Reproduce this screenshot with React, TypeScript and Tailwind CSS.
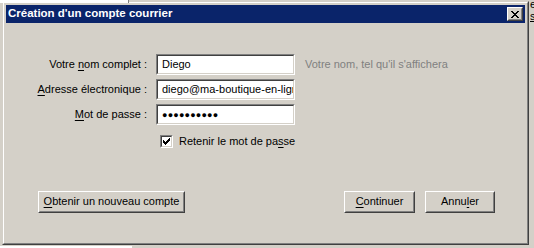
import React from 'react';

const ui = { fontFamily: '"Liberation Sans", Arial, sans-serif' };

function Accel({ text, at }: { text: string; at: number }) {
  return (
    <>
      {text.slice(0, at)}
      <span className="underline underline-offset-[2px]">{text[at]}</span>
      {text.slice(at + 1)}
    </>
  );
}

function Field({ children }: { children: React.ReactNode }) {
  return (
    <div className="h-[21px] w-[139px] border border-t-[#808080] border-l-[#808080] border-r-white border-b-white">
      <div className="h-full overflow-hidden whitespace-nowrap border border-t-[#404040] border-l-[#404040] border-r-[#d4d0c8] border-b-[#d4d0c8] bg-white pl-[4px] text-[11px] leading-[17px] text-black">
        {children}
      </div>
    </div>
  );
}

function Button({ children, width }: { children: React.ReactNode; width: string }) {
  return (
    <div className={`h-[22px] ${width} border border-t-white border-l-white border-r-[#404040] border-b-[#404040]`}>
      <div className="flex h-full items-center justify-center border border-transparent border-r-[#808080] border-b-[#808080] bg-[#d4d0c8] text-[11px] text-black">
        {children}
      </div>
    </div>
  );
}

export default function App() {
  return (
    <div className="relative h-[248px] w-[534px] overflow-hidden bg-[#d4d0c8]" style={ui}>
      {/* bits of the desktop behind the dialog */}
      <div className="absolute left-0 top-0 h-[3px] w-[129px] border-r border-[#808080] bg-white" />
      <div className="absolute bottom-0 left-0 h-[2px] w-[132px] bg-white" />
      <div className="absolute left-[530px] top-[-2px] text-[11px] leading-[13px] text-black">er</div>
      <div className="absolute left-[530px] top-[10px] text-[11px] leading-[13px] text-black underline">s</div>

      {/* dialog window */}
      <div className="ml-[2px] mt-[1px] h-[244px] w-[527px] border border-t-[#d4d0c8] border-l-[#d4d0c8] border-r-[#404040] border-b-[#404040]">
        <div className="flex h-full flex-col border border-t-white border-l-white border-r-[#808080] border-b-[#808080] bg-[#d4d0c8] p-[2px]">
          <div className="flex h-[18px] items-center justify-between bg-[#0a246a] pl-[2px] pr-[2px]">
            <span className="text-[11.5px] font-bold leading-none text-white">Création d'un compte courrier</span>
            <div className="h-[14px] w-[16px] border border-t-white border-l-white border-r-[#404040] border-b-[#404040]">
              <div className="flex h-full items-center justify-center border border-transparent border-r-[#808080] border-b-[#808080] bg-[#d4d0c8]">
                <svg width="8" height="7" viewBox="0 0 8 7" shapeRendering="crispEdges">
                  <path d="M0 0h2v1h-2zM6 0h2v1h-2zM1 1h2v1h-2zM5 1h2v1h-2zM2 2h4v1h-4zM3 3h2v1h-2zM2 4h4v1h-4zM1 5h2v1h-2zM5 5h2v1h-2zM0 6h2v1h-2zM6 6h2v1h-2z" fill="#000" />
                </svg>
              </div>
            </div>
          </div>

          <div className="flex flex-1 flex-col">
            <div className="grid grid-cols-[141px_139px_auto] items-center gap-x-[9px] gap-y-[4px] pt-[31px] text-[11px] text-black">
              <div className="text-right">
                Votre <Accel text="nom" at={0} /> complet :
              </div>
              <Field>Diego</Field>
              <div className="pl-[1px] text-[#808080]">Votre nom, tel qu'il s'affichera</div>

              <div className="text-right">
                <Accel text="Adresse" at={0} /> électronique :
              </div>
              <Field>diego@ma-boutique-en-ligne.com</Field>
              <div />

              <div className="text-right">
                <Accel text="Mot" at={0} /> de passe :
              </div>
              <Field>
                <span className="text-[9px] tracking-[0.2px]">●●●●●●●●●●</span>
              </Field>
              <div />
            </div>

            <div className="ml-[154px] mt-[8px] flex items-center gap-[6px] text-[11px] text-black">
              <div className="h-[13px] w-[13px] border border-t-[#808080] border-l-[#808080] border-r-white border-b-white">
                <div className="flex h-full items-center justify-center border border-t-[#404040] border-l-[#404040] border-r-[#d4d0c8] border-b-[#d4d0c8] bg-white">
                  <svg width="7" height="7" viewBox="0 0 7 7" shapeRendering="crispEdges">
                    <path d="M6 0h1v3h-1zM5 1h1v3h-1zM4 2h1v3h-1zM3 3h1v3h-1zM2 4h1v3h-1zM1 3h1v3h-1zM0 2h1v3h-1z" fill="#000" />
                  </svg>
                </div>
              </div>
              <span>
                Retenir le mot de pa<span className="underline underline-offset-[2px]">s</span>se
              </span>
            </div>

            <div className="mt-[41px] flex items-center pl-[32px] pr-[30px]">
              <Button width="w-[147px]">
                <Accel text="Obtenir" at={0} />&nbsp;un nouveau compte
              </Button>
              <div className="ml-auto flex gap-[10px]">
                <Button width="w-[71px]">
                  <Accel text="Continuer" at={0} />
                </Button>
                <Button width="w-[70px]">
                  <Accel text="Annuler" at={4} />
                </Button>
              </div>
            </div>
          </div>
        </div>
      </div>
    </div>
  );
}
